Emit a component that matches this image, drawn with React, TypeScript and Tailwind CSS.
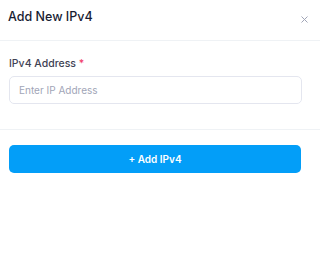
import React from "react";

export default function App() {
    return (
        <div className="w-[320px] h-[275px] bg-white font-['Inter',sans-serif] text-[#181c32]">
            <div className="flex items-center justify-between h-[41px] pl-2 pr-3 border-b border-[#eff2f5]">
                <h2 className="text-[12.5px] font-medium -mt-[5px]">Add New IPv4</h2>
                <button className="text-[#a1a5b7] -mt-[1px]">
                    <svg width="7" height="7" viewBox="0 0 7 7" fill="none" stroke="currentColor" strokeWidth="1">
                        <path d="M0.5 0.5 L6.5 6.5 M6.5 0.5 L0.5 6.5" />
                    </svg>
                </button>
            </div>
            <div className="px-[9px] pt-[15px] pb-[25px] border-b border-[#eff2f5]">
                <label className="block text-[10.5px] font-medium text-[#3f4254] mb-[4px]">
                    IPv4 Address <span className="text-[#f1416c]">*</span>
                </label>
                <input
                    className="w-[293px] h-[28px] px-[9px] rounded-[5px] border border-[#e4e6ef] text-[10px] placeholder:text-[#a1a5b7] outline-none"
                    placeholder="Enter IP Address"
                />
            </div>
            <div className="px-[9px] pt-[15px]">
                <button className="w-[292px] h-[28px] rounded-[5px] bg-[#039ef8] text-white text-[10px] font-semibold">
                    + Add IPv4
                </button>
            </div>
        </div>
    );
}
